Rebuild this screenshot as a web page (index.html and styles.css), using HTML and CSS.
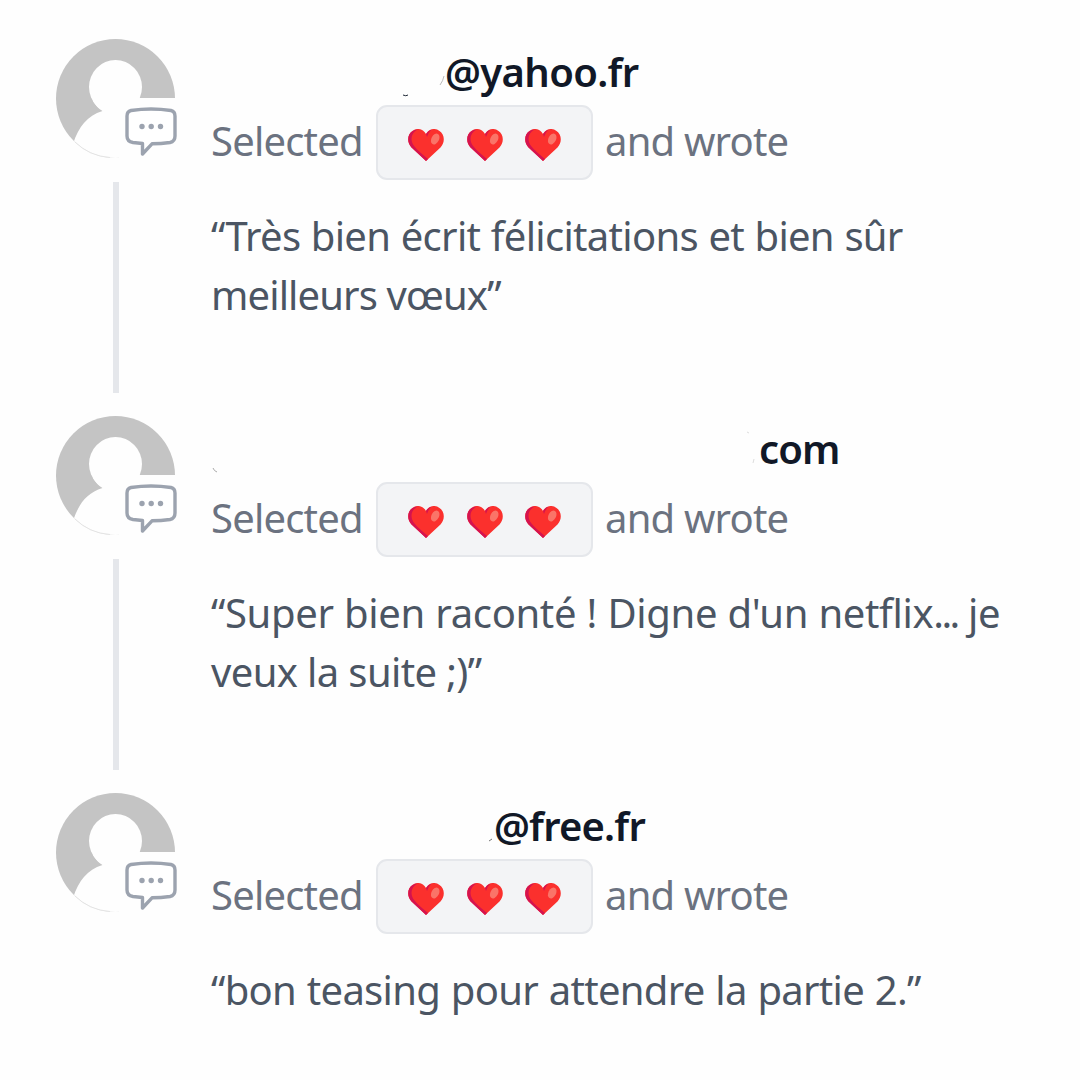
FILE: index.html
```html
<!DOCTYPE html>
<html lang="fr">
<head>
<meta charset="utf-8">
<title>Feedback</title>
<link rel="stylesheet" href="styles.css">
</head>
<body>
<svg class="defs" width="0" height="0" aria-hidden="true">
  <defs>
    <clipPath id="disc"><circle cx="59.5" cy="59.5" r="59.5"/></clipPath>
    <symbol id="avatar" viewBox="0 0 124 124">
      <g clip-path="url(#disc)">
        <rect width="119" height="119" fill="#c4c4c4"/>
        <ellipse cx="59.5" cy="48" rx="26.500" ry="27"/>
        <path d="M17 105C23 87 31 77 46.500 72Q41 69 37 62L60 50L84 59H119V119H17Z"/>
      </g>
      <path d="M19 103Q33 117 54 118.5" fill="none" stroke="#e4e4e4" stroke-width="1"/>
      <rect x="63" y="59" width="61" height="65"/>
      <path d="M75 71.5Q95 68.500 115 71.500Q119 72.500 119 77V97Q119 102.500 114 103.500Q105 104.800 96 104.800L86.500 115V104.500L77 103.500Q71 102.500 71 97V77Q71 72.500 75 71.500Z" fill="#fff" stroke="#9ca3af" stroke-width="3.400" stroke-linejoin="round"/>
      <g fill="#9ca3af"><circle cx="86" cy="87.500" r="2.700"/><circle cx="95.200" cy="87.500" r="2.700"/><circle cx="104.500" cy="87.500" r="2.700"/></g>
    </symbol>
    <symbol id="heart" viewBox="0 0 36 32">
      <path d="M18 32L3.500 18.500C-1.500 13-.5 5 4.500 2C9-1.500 15-.5 18 5C21-.5 27-1.500 31.500 2C36.500 5 37.500 13 32.500 18.500Z" fill="#fb302d"/>
      <path d="M18 32L3.500 18.500C-1.500 13-.5 5 4.500 2Q7 .3 9.500 .4C3 4 1.500 11 6.500 17.500Q10 22 20 30Z" fill="#d5134f"/>
      <path d="M18 5Q20 1.500 23.500 .5Q20 4 19 8Z" fill="#d5134f"/>
      <ellipse cx="27.200" cy="10" rx="3.800" ry="5.800" transform="rotate(28 27.200 10)" fill="#fa7468"/>
    </symbol>
  </defs>
</svg>
<main class="feed">
  <article class="entry">
    <div class="rail"><svg class="avatar"><use href="#avatar"/></svg><span class="line"></span></div>
    <div class="body">
      <h2 class="name yahoo"><svg class="specks" width="46" height="30" viewBox="0 0 46 30"><path d="M4 28Q7 29.500 9 28" stroke="#1f2937" fill="none"/><path d="M41 18Q44 14 45 9" stroke="#bbb" fill="none"/></svg><span>@yahoo.fr</span></h2>
      <div class="meta"><span class="selected">Selected</span><span class="rating"><svg><use href="#heart"/></svg><svg><use href="#heart"/></svg><svg><use href="#heart"/></svg></span><span class="wrote">and wrote</span></div>
      <p class="quote"><span class="q1">“Très bien écrit félicitations et bien sûr</span><br><span class="q2">meilleurs vœux”</span></p>
    </div>
  </article>
  <article class="entry">
    <div class="rail"><svg class="avatar"><use href="#avatar"/></svg><span class="line"></span></div>
    <div class="body">
      <h2 class="name mail"><svg class="specks" width="548" height="44" viewBox="0 0 548 44"><path d="M2 41Q3 44 6 45" stroke="#aaa" fill="none"/><path d="M536 5L538 6M542 36L543 32" stroke="#ddd" fill="none"/></svg><span>com</span></h2>
      <div class="meta"><span class="selected">Selected</span><span class="rating"><svg><use href="#heart"/></svg><svg><use href="#heart"/></svg><svg><use href="#heart"/></svg></span><span class="wrote">and wrote</span></div>
      <p class="quote"><span class="q3">“Super bien raconté ! Digne d'un netflix<span class="dots">...</span> je</span><br><span class="q4">veux la suite ;)”</span></p>
    </div>
  </article>
  <article class="entry">
    <div class="rail"><svg class="avatar"><use href="#avatar"/></svg></div>
    <div class="body">
      <h2 class="name free"><svg class="specks" width="8" height="16" viewBox="0 0 8 16"><path d="M3 15L6 13" stroke="#777" fill="none"/></svg><span>@free.fr</span></h2>
      <div class="meta"><span class="selected">Selected</span><span class="rating"><svg><use href="#heart"/></svg><svg><use href="#heart"/></svg><svg><use href="#heart"/></svg></span><span class="wrote">and wrote</span></div>
      <p class="quote"><span class="q5">“bon teasing pour attendre la partie 2.”</span></p>
    </div>
  </article>
</main>
</body>
</html>
```
FILE: styles.css
```css
* { box-sizing: border-box; }
body { margin: 0; background: #fefefe; font-family: "Noto Sans", "Open Sans", sans-serif; font-size: 40px; color: #4b5563; }
.defs { display: block; }
.feed { height: 1080px; padding: 39px 0 0 56px; overflow: hidden; }
.entry { display: grid; grid-template-columns: 124px 1fr; column-gap: 31px; height: 377px; }
.rail { display: flex; flex-direction: column; align-items: flex-start; }
.avatar { display: block; flex: none; width: 124px; height: 124px; fill: #fefefe; }
.line { width: 6px; height: 211px; margin: 19px 0 0 57px; background: #e5e7eb; }
.name { display: flex; align-items: center; height: 66px; margin: 0; font-size: 40px; font-weight: 600; line-height: 66px; color: #111827; white-space: nowrap; }
.specks { flex: none; overflow: visible; }
.yahoo { padding-left: 188px; letter-spacing: -0.65px; }
.yahoo .specks { align-self: flex-end; margin-bottom: 8px; }
.mail { letter-spacing: -0.9px; }
.free { padding-left: 275px; letter-spacing: -0.8px; }
.free .specks { align-self: flex-end; margin-bottom: 17px; }
.meta { display: flex; align-items: center; height: 75px; color: #6b7280; line-height: 71px; letter-spacing: -0.8px; white-space: nowrap; }
.selected { width: 165px; padding-bottom: 4px; }
.rating { display: flex; align-items: center; gap: 22.5px; width: 217px; height: 75px; padding: 4px 0 0 30px; margin-right: 12px; border: 2px solid #e5e7eb; border-radius: 11px; background: #f3f4f6; }
.rating svg { flex: none; width: 36px; height: 32px; }
.wrote { padding-bottom: 4px; }
.quote { margin: 26px 0 0; line-height: 59px; white-space: nowrap; }
.q1 { letter-spacing: -0.7px; word-spacing: 0.8px; }
.q2 { letter-spacing: -0.87px; }
.q3 { letter-spacing: -0.35px; word-spacing: 0.4px; }
.dots { letter-spacing: -2.6px; }
.q4 { letter-spacing: -0.62px; }
.q5 { letter-spacing: -0.7px; word-spacing: 1px; }
```
